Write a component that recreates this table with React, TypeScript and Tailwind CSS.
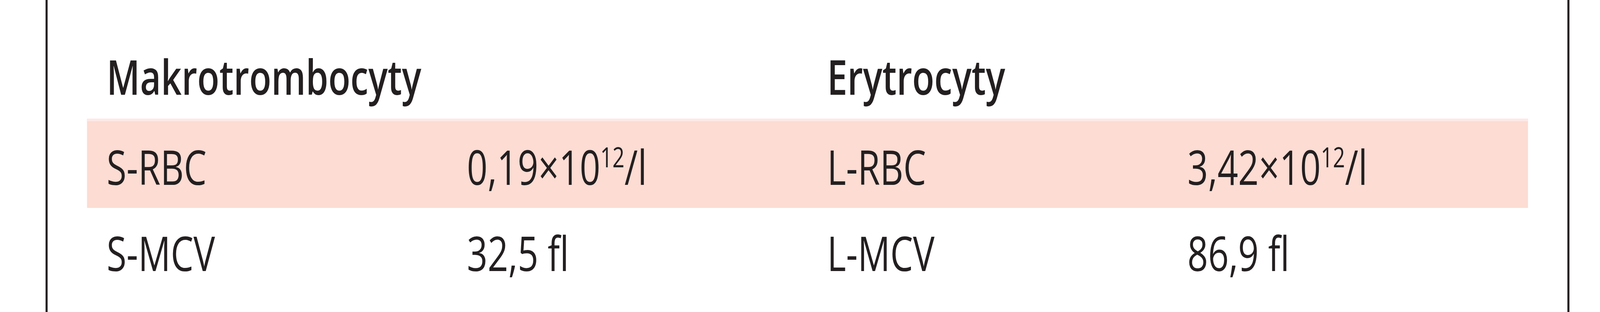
import { useEffect, useState } from 'react';

const DESIGN_WIDTH = 5444;

const ROWS = [
  { left: 'S-RBC', leftValue: '0,19', leftUnit: true, right: 'L-RBC', rightValue: '3,42', rightUnit: true },
  { left: 'S-MCV', leftValue: '32,5 fl', leftUnit: false, right: 'L-MCV', rightValue: '86,9 fl', rightUnit: false },
];

function Value({ value, unit }: { value: string; unit: boolean }) {
  if (!unit) return <>{value}</>;
  return (
    <>
      {value}×10<sup className="text-[72px] top-[-0.62em]">12</sup>/l
    </>
  );
}

function useFitScale() {
  const get = () => Math.min(1, window.innerWidth / DESIGN_WIDTH);
  const [scale, setScale] = useState(get);
  useEffect(() => {
    const onResize = () => setScale(get());
    window.addEventListener('resize', onResize);
    return () => window.removeEventListener('resize', onResize);
  }, []);
  return scale;
}

export default function App() {
  const scale = useFitScale();

  return (
    <div className="w-full h-[800px] overflow-hidden bg-white">
      {/* fixed-width sheet, squeezed horizontally to fit the window */}
      <div
        className="w-[5444px] h-[800px] origin-top-left font-['Open_Sans',sans-serif] text-[#231f20] text-[123px]"
        style={{ transform: `scaleX(${scale})` }}
      >
        <div className="ml-[155px] w-[5185px] h-[800px] border-x-[7px] border-[#231f20] px-[134px] pt-[76px]">
          {/* Header */}
          <div className="grid grid-cols-4 font-semibold pt-[12px] leading-[216px] h-[228px]">
            <div className="col-span-2 pl-[67px] whitespace-nowrap">Makrotrombocyty</div>
            <div className="col-span-2 pl-[67px] whitespace-nowrap">Erytrocyty</div>
          </div>

          {/* Row 1 - highlighted */}
          <div className="grid grid-cols-4 bg-[#fcdcd3] border-t-[7px] border-[#fde9e5] pt-[9px] leading-[213px] h-[229px]">
            <div className="pl-[67px] whitespace-nowrap">{ROWS[0].left}</div>
            <div className="pl-[67px] whitespace-nowrap">
              <Value value={ROWS[0].leftValue} unit={ROWS[0].leftUnit} />
            </div>
            <div className="pl-[67px] whitespace-nowrap">{ROWS[0].right}</div>
            <div className="pl-[67px] whitespace-nowrap">
              <Value value={ROWS[0].rightValue} unit={ROWS[0].rightUnit} />
            </div>
          </div>

          {/* Row 2 */}
          <div className="grid grid-cols-4 pt-[2px] leading-[226px] h-[228px]">
            <div className="pl-[67px] whitespace-nowrap">{ROWS[1].left}</div>
            <div className="pl-[67px] whitespace-nowrap">
              <Value value={ROWS[1].leftValue} unit={ROWS[1].leftUnit} />
            </div>
            <div className="pl-[67px] whitespace-nowrap">{ROWS[1].right}</div>
            <div className="pl-[67px] whitespace-nowrap">
              <Value value={ROWS[1].rightValue} unit={ROWS[1].rightUnit} />
            </div>
          </div>
        </div>
      </div>
    </div>
  );
}
